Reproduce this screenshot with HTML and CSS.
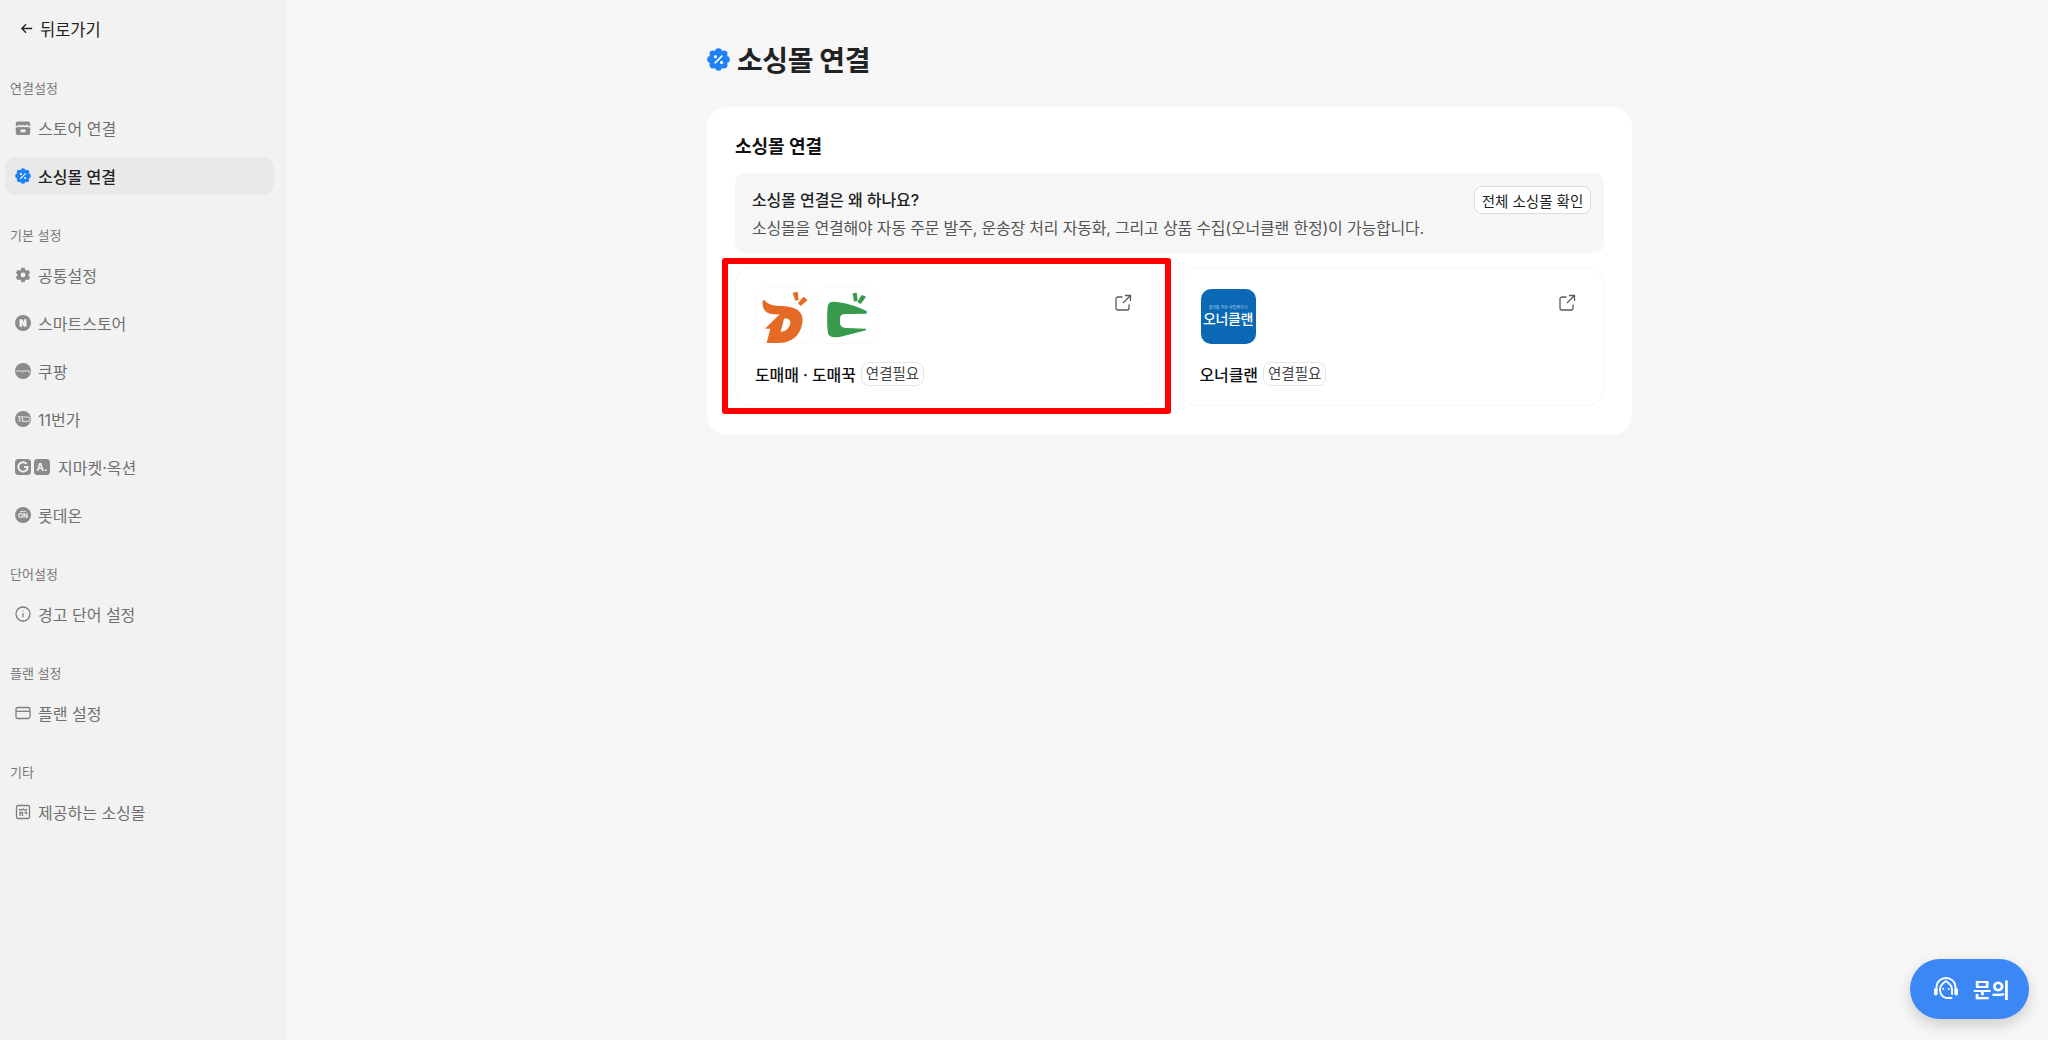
FILE: index.html
```html
<!DOCTYPE html>
<html lang="ko">
  <head>
    <meta charset="utf-8">
    <title>소싱몰 연결</title>
    <link rel="stylesheet" href="styles.css">
  </head>
  <body>
    <aside class="side">
      <a class="back">
        <svg class="back-arrow" viewBox="0 0 16 16"><path d="M14 8H3M7.5 3.5 3 8l4.500 4.500"/></svg>
        뒤로가기
      </a>

      <section class="group">
        <h4 class="group-label">연결설정</h4>
        <a class="item">
          <svg class="ico" viewBox="0 0 16 16"><rect x=".8" y="1.500" width="14.400" height="13.500" rx="2"/><path class="cut" d="M.8 6.800c1.500 0 2.500-.2 3.600-1.200 1 1 2 1.200 3.600 0 1.600 1.200 2.600 1 3.600 0 1.100 1 2.100 1.200 3.600 1.200"/><rect class="door" x="5.500" y="9.500" width="5" height="2.800"/></svg>
          스토어 연결
        </a>
        <a class="item item-active">
          <svg class="ico" viewBox="0 0 24 24">
            <g class="badge-blue">
              <circle cx="12" cy="12" r="9"/><circle cx="12" cy="3.800" r="3.600"/><circle cx="12" cy="20.200" r="3.600"/><circle cx="3.800" cy="12" r="3.600"/><circle cx="20.200" cy="12" r="3.600"/><circle cx="6.200" cy="6.200" r="3.600"/><circle cx="17.800" cy="6.200" r="3.600"/><circle cx="6.200" cy="17.800" r="3.600"/><circle cx="17.800" cy="17.800" r="3.600"/>
            </g>
            <path class="cut" d="M8.500 15.500l7-7"/><circle class="dot" cx="8.800" cy="9" r="1.600"/><circle class="dot" cx="15.200" cy="15" r="1.600"/>
          </svg>
          소싱몰 연결
        </a>
      </section>

      <section class="group">
        <h4 class="group-label">기본 설정</h4>
        <a class="item">
          <svg class="ico" viewBox="0 0 16 16"><path fill-rule="evenodd" d="M6.400.8h3.200l.5 2 1.400.8 2-.6 1.600 2.800-1.500 1.400v1.600l1.500 1.400-1.600 2.800-2-.6-1.400.8-.5 2H6.400l-.5-2-1.400-.8-2 .6L.9 10.200l1.500-1.400V7.200L.9 5.800 2.500 3l2 .6 1.400-.8zM8 5.600a2.400 2.400 0 1 0 0 4.800 2.400 2.400 0 0 0 0-4.800z"/></svg>
          공통설정
        </a>
        <a class="item">
          <svg class="ico" viewBox="0 0 16 16"><circle cx="8" cy="8" r="8"/><path class="mark" d="M4.500 4.300h2.700l1.700 2.900V4.300h2.600v7.400H8.800L7.100 8.800v2.900H4.500z"/></svg>
          스마트스토어
        </a>
        <a class="item">
          <svg class="ico" viewBox="0 0 16 16"><circle cx="8" cy="8" r="8"/><text class="ico-tiny" x="8" y="9.200" text-anchor="middle">coupang</text></svg>
          쿠팡
        </a>
        <a class="item">
          <svg class="ico" viewBox="0 0 16 16"><circle cx="8" cy="8" r="8"/><text class="ico-num" x="5.400" y="10.800" text-anchor="middle">11</text><path class="cut cut-thin" d="M9 6l3.800 0a2 2 0 0 1 0 4.400H8.500"/></svg>
          11번가
        </a>
        <a class="item">
          <span class="ico-pair">
            <svg class="ico" viewBox="0 0 16 16"><rect width="16" height="16" rx="3.500"/><path class="ring" d="M11.600 4.900a4.700 4.700 0 1 0 1.100 3.100H8.500"/><circle cx="8" cy="8" r="1.300"/></svg>
            <svg class="ico" viewBox="0 0 16 16"><rect width="16" height="16" rx="3.500"/><text class="ico-letter" x="8" y="12" text-anchor="middle">A.</text></svg>
          </span>
          지마켓·옥션
        </a>
        <a class="item">
          <svg class="ico" viewBox="0 0 16 16"><circle cx="8" cy="8" r="8"/><path class="cut cut-thin" d="M5.500 4.600h5"/><text class="ico-on" x="8" y="11.200" text-anchor="middle">ON</text></svg>
          롯데온
        </a>
      </section>

      <section class="group">
        <h4 class="group-label">단어설정</h4>
        <a class="item">
          <svg class="ico ico-line" viewBox="0 0 16 16"><circle cx="8" cy="8" r="7"/><path d="M8 7.300v4"/><path d="M8 4.500v.8"/></svg>
          경고 단어 설정
        </a>
      </section>

      <section class="group">
        <h4 class="group-label">플랜 설정</h4>
        <a class="item">
          <svg class="ico ico-line" viewBox="0 0 16 16"><rect x="1" y="2.500" width="14" height="11" rx="1.800"/><path d="M1 6.300h14"/></svg>
          플랜 설정
        </a>
      </section>

      <section class="group">
        <h4 class="group-label">기타</h4>
        <a class="item">
          <svg class="ico ico-line" viewBox="0 0 16 16"><rect x="1.500" y="1.500" width="13" height="13" rx="1.500"/><path d="M4 5c1 1.400 2.500 1.400 4 0 1.500 1.400 3 1.400 4 0M5 12V8.500h2.500V12M9.500 8.500H11.500V10.500"/></svg>
          제공하는 소싱몰
        </a>
      </section>
    </aside>

    <main class="main">
      <div class="wrap">
        <h1 class="page-title">
          <svg class="page-ico" viewBox="0 0 24 24">
            <g class="badge-blue">
              <circle cx="12" cy="12" r="9"/><circle cx="12" cy="3.800" r="3.600"/><circle cx="12" cy="20.200" r="3.600"/><circle cx="3.800" cy="12" r="3.600"/><circle cx="20.200" cy="12" r="3.600"/><circle cx="6.200" cy="6.200" r="3.600"/><circle cx="17.800" cy="6.200" r="3.600"/><circle cx="6.200" cy="17.800" r="3.600"/><circle cx="17.800" cy="17.800" r="3.600"/>
            </g>
            <path class="cut" d="M8.500 15.500l7-7"/><circle class="dot" cx="8.800" cy="9" r="1.600"/><circle class="dot" cx="15.200" cy="15" r="1.600"/>
          </svg>
          소싱몰 연결
        </h1>

        <section class="panel">
          <h2 class="panel-title">소싱몰 연결</h2>

          <div class="notice">
            <div>
              <p class="notice-title">소싱몰 연결은 왜 하나요?</p>
              <p class="notice-text">소싱몰을 연결해야 자동 주문 발주, 운송장 처리 자동화, 그리고 상품 수집(오너클랜 한정)이 가능합니다.</p>
            </div>
            <button class="btn-outline">전체 소싱몰 확인</button>
          </div>

          <div class="cards">
            <article class="card">
              <div class="card-top">
                <div class="logos">
                  <div class="tile">
                    <svg viewBox="15 21 171 171">
                      <path class="logo-orange" fill-rule="evenodd" d="M38 62L43 60C52 71 63 76 80 77C101 78 124 79 138 87C156 97 161 115 156 135C149 166 126 186 96 188C80 190 66 189 50 189L61 146H45L89 103C71 104 56 102 48 95C40 88 36 76 38 62zM102 116L92 155C108 155 118 144 121 130C123 120 114 115 102 116z"/>
                      <path class="logo-orange" d="M128 38l15-3 3 25-10 2zM160 50l13 10-21 18-8-8z"/>
                    </svg>
                  </div>
                  <div class="tile">
                    <svg viewBox="204 21 171 171">
                      <path class="logo-green" d="M250 65c32 2 70 12 100 28v8l-62 1c-12 0-18 4-18 12v16c0 8 6 13 18 14l60 2v5l-76 19c-18 4-35 3-38-10-3-24-3-60-1-80 1-10 7-15 17-15z"/>
                      <path class="logo-green" d="M308 40l12-2 3 24-11 3zM335 45l13 5-16 22-10-6z"/>
                    </svg>
                  </div>
                </div>
                <svg class="ext" viewBox="0 0 18 18"><path d="M8.500 3H4a2 2 0 0 0-2 2v9a2 2 0 0 0 2 2h9a2 2 0 0 0 2-2v-3.500M11 1.500h5.500V7M16.500 1.500 9 9"/></svg>
              </div>
              <div class="card-label">
                <strong class="card-name">도매매 · 도매꾹</strong>
                <span class="tag">연결필요</span>
              </div>
              <div class="mark-box"></div>
            </article>

            <article class="card">
              <div class="card-top">
                <div class="logos">
                  <div class="owner">
                    <span class="owner-sub">셀러를 위한 사입파트너</span>
                    <span class="owner-name">오너클랜</span>
                  </div>
                </div>
                <svg class="ext" viewBox="0 0 18 18"><path d="M8.500 3H4a2 2 0 0 0-2 2v9a2 2 0 0 0 2 2h9a2 2 0 0 0 2-2v-3.500M11 1.500h5.500V7M16.500 1.500 9 9"/></svg>
              </div>
              <div class="card-label">
                <strong class="card-name">오너클랜</strong>
                <span class="tag">연결필요</span>
              </div>
            </article>
          </div>
        </section>
      </div>
    </main>

    <button class="fab">
      <svg class="fab-ico" viewBox="0 0 26 24">
        <path d="M3.500 13V10.500C3.500 5 7.800 1 13 1s9.500 4 9.500 9.500V13"/>
        <path d="M7 12.500C7 8 10 6 13 4c3 2 6 4 6 8.500"/>
        <path d="M7 12.500c0 4.500 2.500 7.500 6 8.500h5.500"/>
        <path d="M19 12.500V17"/>
        <rect class="fab-fill" x="1" y="11" width="3.600" height="7.500" rx="1.800"/>
        <rect class="fab-fill" x="21.400" y="11" width="3.600" height="7.500" rx="1.800"/>
        <circle class="fab-fill" cx="10.200" cy="12" r="1"/>
        <circle class="fab-fill" cx="15.800" cy="12" r="1"/>
      </svg>
      문의
    </button>
  </body>
</html>
```

FILE: styles.css
```css
* {
  box-sizing: border-box;
}

body {
  background: #f6f6f6;
  color: #222;
  display: flex;
  font-family: Inter, "Noto Sans CJK KR", sans-serif;
  height: 1040px;
  margin: 0;
  overflow: hidden;
}

h1, h2, h4, p {
  margin: 0;
}

/* sidebar */
.side {
  background: #f2f2f2;
  border-right: 1px solid #eeeeee;
  display: flex;
  flex: 0 0 286px;
  flex-direction: column;
  gap: 30px;
  padding: 9px 11px 0 5px;
}

.back {
  align-items: center;
  display: flex;
  font-size: 16.500px;
  gap: 6px;
  height: 39px;
  padding-left: 14px;
}

.back-arrow {
  fill: none;
  height: 15px;
  stroke: #222;
  stroke-width: 1.400;
  width: 15px;
}

.group {
  display: flex;
  flex-direction: column;
  gap: 10px;
}

.group-label {
  color: #777;
  font-size: 13px;
  font-weight: 400;
  line-height: 20px;
  margin-bottom: 1px;
  padding-left: 5px;
}

.item {
  align-items: center;
  border-radius: 10px;
  color: #6f6f6f;
  display: flex;
  font-size: 16px;
  gap: 7px;
  height: 38px;
  padding-left: 10px;
}

.item-active {
  background: #e9e9e9;
  color: #222;
  font-weight: 500;
}

.ico {
  fill: #8b8b8b;
  flex: none;
  height: 16px;
  width: 16px;
}

.ico-pair {
  display: flex;
  gap: 3px;
  margin-right: 1px;
}

.ico-line {
  fill: none;
  stroke: #7d7d7d;
  stroke-width: 1.300;
}

.cut {
  fill: none;
  stroke: #fff;
  stroke-linecap: round;
  stroke-width: 1.600;
}

.item .cut {
  stroke: #f2f2f2;
}

.item-active .cut {
  stroke: #fff;
}

.cut-thin {
  stroke-width: .9;
}

.door {
  fill: #f2f2f2;
}

.mark {
  fill: #f2f2f2;
}

.ring {
  fill: none;
  stroke: #f2f2f2;
  stroke-width: 1.900;
}

.dot {
  fill: #fff;
}

.badge-blue {
  fill: #1f80f5;
}

.ico-tiny {
  fill: #f2f2f2;
  font-size: 3.500px;
}

.ico-num {
  fill: #f2f2f2;
  font-size: 7px;
  font-weight: 600;
}

.ico-letter {
  fill: #f2f2f2;
  font-size: 10px;
  font-weight: 700;
}

.ico-on {
  fill: #f2f2f2;
  font-size: 6.500px;
  font-weight: 700;
}

/* main */
.main {
  flex: 1;
  padding: 39px 0 0 5px;
}

.wrap {
  margin: 0 auto;
  width: 925px;
}

.page-title {
  align-items: center;
  color: #222;
  display: flex;
  font-size: 28px;
  font-weight: 700;
  gap: 7px;
  height: 40px;
  letter-spacing: -.4px;
  margin-bottom: 28px;
}

.page-ico {
  height: 23px;
  width: 23px;
}

.panel {
  background: #fff;
  border-radius: 20px;
  padding: 27px 28px 29px;
}

.panel-title {
  color: #111;
  font-size: 18px;
  font-weight: 700;
  line-height: 26px;
  margin-bottom: 13px;
}

.notice {
  align-items: flex-start;
  background: #f6f6f6;
  border-radius: 10px;
  display: flex;
  height: 80px;
  justify-content: space-between;
  padding: 13px 13px 0 17px;
}

.notice-title {
  color: #222;
  font-size: 16px;
  font-weight: 500;
  letter-spacing: -.1px;
  line-height: 28px;
}

.notice-text {
  color: #555;
  font-size: 16px;
  letter-spacing: -.19px;
  line-height: 28px;
}

.btn-outline {
  background: #fff;
  border: 1px solid #dcdcdc;
  border-radius: 8px;
  color: #222;
  font-family: inherit;
  font-size: 14.500px;
  height: 28px;
  padding: 0;
  width: 117px;
}

.cards {
  display: grid;
  gap: 20px;
  grid-template-columns: 1fr 1fr;
  margin-top: 14px;
}

.card {
  border: 1px solid #f7f7f7;
  border-radius: 16px;
  height: 139px;
  padding: 19px 27px 0 19px;
  position: relative;
}

.card-top {
  display: flex;
  height: 58px;
  justify-content: space-between;
}

.logos {
  display: flex;
  gap: 6px;
}

.tile {
  border: 1px solid #f9f9f9;
  border-radius: 10px;
  height: 57px;
  width: 57px;
}

.tile svg {
  display: block;
  height: 57px;
  margin: -1px;
  width: 57px;
}

.logo-orange {
  fill: #e56a25;
}

.logo-green {
  fill: #389a4b;
}

.owner {
  align-items: center;
  background: #0a68b5;
  border-radius: 10px;
  color: #fff;
  display: flex;
  flex-direction: column;
  height: 55px;
  justify-content: center;
  margin: 2px 0 0 1px;
  overflow: hidden;
  width: 55px;
}

.owner-sub {
  color: #b8d6ee;
  font-size: 4px;
  line-height: 5px;
  white-space: nowrap;
}

.owner-name {
  font-size: 14px;
  font-weight: 500;
  letter-spacing: -.4px;
  line-height: 18px;
  white-space: nowrap;
}

.ext {
  fill: none;
  height: 18px;
  margin-top: 7px;
  stroke: #5a5a5a;
  stroke-width: 1.300;
  width: 18px;
}

.card-label {
  align-items: center;
  display: flex;
  gap: 5px;
  margin-top: 17px;
}

.card-name {
  color: #111;
  font-size: 16px;
  font-weight: 500;
  letter-spacing: -.1px;
}

.tag {
  border: 1px solid #e6e6e6;
  border-radius: 8px;
  color: #444;
  font-size: 14.500px;
  height: 24px;
  line-height: 22px;
  padding: 0 4px;
}

/* red box drawn over the first card */
.mark-box {
  border: 6px solid #f00;
  border-radius: 3px;
  inset: -10px -12px -9px -14px;
  pointer-events: none;
  position: absolute;
}

/* floating button */
.fab {
  align-items: center;
  background: #3b87f6;
  border: 0;
  border-radius: 30px;
  bottom: 21px;
  box-shadow: 0 6px 14px rgba(0, 0, 0, .16);
  color: #fff;
  display: flex;
  font-family: inherit;
  font-size: 20px;
  font-weight: 600;
  gap: 14px;
  height: 60px;
  padding: 0 0 0 23px;
  position: fixed;
  right: 19px;
  width: 119px;
}

.fab-ico {
  fill: none;
  height: 24px;
  stroke: #fff;
  stroke-linecap: round;
  stroke-width: 1.800;
  width: 26px;
}

.fab-fill {
  fill: #fff;
  stroke: none;
}
```
